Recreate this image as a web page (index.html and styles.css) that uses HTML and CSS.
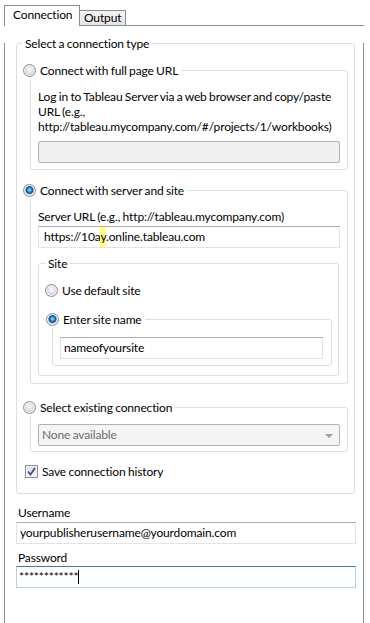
FILE: index.html
```html
<!DOCTYPE html>
<html lang="en">
<head>
    <meta charset="UTF-8">
    <title>Tableau Server connection</title>
    <link rel="stylesheet" href="styles.css">
</head>
<body>
<div class="window">
    <div class="tabs">
        <div class="tab tab-active">Connection</div>
        <div class="tab">Output</div>
        <div class="tab-filler"></div>
    </div>

    <div class="panel">
        <div class="group group-outer">
            <div class="title title-outer">Select a connection type</div>

            <!--full page url-->
            <div class="group group-option">
                <div class="title title-option"><span class="radio"></span>Connect with full page URL</div>
                <div class="option-body">
                    <p class="hint">Log in to Tableau Server via a web browser and copy/paste URL (e.g., http://tableau.mycompany.com/#/projects/1/workbooks)</p>
                    <div class="field field-disabled"></div>
                </div>
            </div>

            <!--server and site-->
            <div class="group group-option group-server">
                <div class="title title-option"><span class="radio radio-on"></span>Connect with server and site</div>
                <div class="option-body">
                    <div class="label">Server URL (e.g., http://tableau.mycompany.com)</div>
                    <div class="field field-url">https://10a<span class="mark">y</span>.online.tableau.com</div>

                    <div class="group group-site">
                        <div class="title title-site">Site</div>
                        <div class="site-row"><span class="radio"></span>Use default site</div>
                        <div class="group group-sitename">
                            <div class="title title-sitename"><span class="radio radio-on"></span>Enter site name</div>
                            <div class="sitename-body">
                                <div class="field">nameofyoursite</div>
                            </div>
                        </div>
                    </div>
                </div>
            </div>

            <!--existing connection-->
            <div class="group group-option group-existing">
                <div class="title title-option"><span class="radio"></span>Select existing connection</div>
                <div class="option-body">
                    <div class="field field-disabled combo">None available<span class="combo-arrow"></span></div>
                </div>
            </div>

            <div class="check-row">
                <span class="checkbox">
                    <svg width="9" height="9" viewBox="0 0 9 9"><path d="M1 4.5 L3.5 7.5 L8 1" fill="none" stroke="#3b4f8a" stroke-width="1.8"/></svg>
                </span>Save connection history
            </div>
        </div>

        <div class="label label-user">Username</div>
        <div class="field field-wide">yourpublisherusername@yourdomain.com</div>
        <div class="label label-pass">Password</div>
        <div class="field field-wide field-focus">************<span class="caret"></span></div>
    </div>
</div>
</body>
</html>
```

FILE: styles.css
```css
/*reset*/
* {
    box-sizing: border-box;
    margin: 0;
    padding: 0;
}

body {
    font-family: Lato, "Open Sans", sans-serif;
    font-size: 12px;
    line-height: 15px;
    letter-spacing: -0.15px;
    word-spacing: -0.5px;
    color: #000;
    background: #fff;
}

.window {
    padding: 5px 0 0 4px;
}

/*tabs*/
.tabs {
    display: flex;
    align-items: flex-end;
    height: 21px;
    width: 360px;
}

.tab {
    height: 16px;
    width: 46px;
    border: 1px solid #898c95;
    border-left: none;
    background: linear-gradient(#f3f3f3, #e4e4e4);
    line-height: 14px;
    padding-left: 4px;
}

.tab-active {
    height: 21px;
    width: 76px;
    border-left: 1px solid #898c95;
    border-bottom: none;
    background: #fff;
    line-height: 18px;
    padding-left: 8px;
}

.tab-filler {
    flex: 1;
    border-bottom: 1px solid #898c95;
}

.panel {
    width: 360px;
    height: 593px;
    border: 1px solid #898c95;
    border-top: none;
    padding: 0 8px 0 11px;
}

/*group boxes*/
.group {
    border: 1px solid #d5dfe5;
    border-radius: 3px;
}

.title {
    display: flex;
    align-items: center;
    width: fit-content;
    height: 17px;
    margin-top: -9px;
    padding: 0 3px;
    background: #fff;
}

.group-outer {
    margin-top: 17px;
    padding-bottom: 13px;
}

.title-outer {
    margin-left: 5px;
}

.group-option {
    margin: 18px 6px 0 13px;
}

.title-option {
    margin-left: -9px;
    padding-left: 1px;
    gap: 4px;
}

.option-body {
    padding: 10px 7px 6px 7px;
}

.hint {
    margin-bottom: 7px;
}

.group-server {
    margin-top: 20px;
}

.group-server .option-body {
    padding-top: 10px;
    padding-bottom: 7px;
}

.label {
    height: 15px;
    margin-bottom: 2px;
}

.group-site {
    margin: 15px 1px 0 0;
    padding: 0 6px 9px 7px;
}

.title-site {
    margin-left: -1px;
}

.site-row {
    display: flex;
    align-items: center;
    gap: 4px;
    height: 17px;
    margin-top: 10px;
    margin-left: -1px;
}

.group-sitename {
    margin: 20px 0 0 6px;
}

.title-sitename {
    margin-left: -8px;
    padding-left: 1px;
    gap: 4px;
}

.sitename-body {
    padding: 9px 8px 6px 7px;
}

.group-existing {
    margin-top: 23px;
}

.group-existing .option-body {
    padding-top: 8px;
    padding-bottom: 5px;
}

.check-row {
    display: flex;
    align-items: center;
    gap: 4px;
    height: 17px;
    margin: 11px 0 0 8px;
}

/*controls*/
.radio {
    display: inline-block;
    width: 13px;
    height: 13px;
    border: 1px solid #8e8f8f;
    border-radius: 50%;
    background: radial-gradient(circle at 50% 40%, #fbfbfb 0, #e6e6e6 3px, #cfcfcf 6px);
    box-shadow: inset 0 0 0 1px #f2f2f2;
}

.radio-on {
    background: radial-gradient(circle at 50% 45%, #a9e4ff 0, #2d8fd6 2px, #0f4f8c 3.5px, #6b8bab 4px, transparent 4.5px),
                radial-gradient(circle at 50% 40%, #fbfbfb 0, #e6e6e6 3px, #cfcfcf 6px);
}

.checkbox {
    display: inline-flex;
    align-items: center;
    justify-content: center;
    width: 13px;
    height: 13px;
    border: 1px solid #8e8f8f;
    background: linear-gradient(#dcdcdc, #f8f8f8);
    box-shadow: inset 0 0 0 1px #f4f4f4;
}

.field {
    height: 22px;
    border: 1px solid #e2e3ea;
    border-top-color: #abadb3;
    line-height: 20px;
    padding-left: 3px;
    color: #000;
    white-space: nowrap;
}

.field-disabled {
    background: #f0f0f0;
    border-color: #adb2b5;
    border-radius: 2px;
}

.field-url {
    padding-left: 5px;
}

.mark {
    background: #ffff80;
    padding: 2px 0 3px;
}

.combo {
    position: relative;
    color: #6d6d6d;
    background: #f4f4f4;
}

.combo-arrow {
    position: absolute;
    right: 6px;
    top: 9px;
    border-left: 4px solid transparent;
    border-right: 4px solid transparent;
    border-top: 4px solid #a0a0a0;
}

.label-user {
    margin-top: 11px;
    padding-left: 2px;
}

.label-pass {
    margin-top: 6px;
    padding-left: 2px;
}

.field-wide {
    width: 340px;
}

.label-pass + .field {
    margin-top: -1px;
}

.field-focus {
    border-color: #b5cfe7;
    border-top-color: #3d7bad;
    padding-left: 2px;
}

.caret {
    display: inline-block;
    width: 1px;
    height: 14px;
    background: #000;
    vertical-align: -3px;
}
```
